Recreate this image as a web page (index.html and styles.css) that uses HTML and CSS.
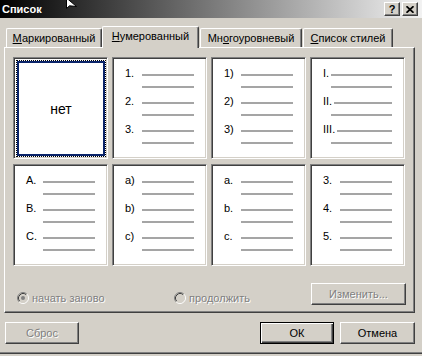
FILE: index.html
```html
<!DOCTYPE html>
<html lang="ru">
<head>
<meta charset="utf-8">
<title>Список</title>
<link rel="stylesheet" href="styles.css">
</head>
<body>
<div class="titlebar">
  <span class="title">Список</span>
  <div class="tbtns">
    <div class="tbtn q">?</div>
    <div class="tbtn">
      <svg width="8" height="7" viewBox="0 0 8 7"><path d="M0.5 0.2 L7.5 6.8 M7.5 0.2 L0.5 6.8" stroke="#000" stroke-width="1.7"/></svg>
    </div>
  </div>
</div>
<svg class="cursor" width="14" height="10" viewBox="0 0 14 10"><path d="M1.5 -2 L1.5 8.5 L4.5 5.8 L11.5 6.5 Z" fill="#fff" stroke="#000" stroke-width="1"/></svg>

<div class="tabs">
  <div class="tab t1"><span><u>М</u>аркированный</span></div>
  <div class="tab active"><span><u>Н</u>умерованный</span></div>
  <div class="tab t3"><span>Мн<u>о</u>гоуровневый</span></div>
  <div class="tab t4"><span><u>С</u>писок стилей</span></div>
</div>

<div class="panel">
  <div class="grid">
    <div class="cell selcell"><div class="focus"><div class="sel">нет</div></div></div>

    <div class="cell">
      <div class="it"><div class="r"><span class="n">1.</span><i class="ln"></i></div><div class="r r2"><i class="ln"></i></div></div>
      <div class="it"><div class="r"><span class="n">2.</span><i class="ln"></i></div><div class="r r2"><i class="ln"></i></div></div>
      <div class="it"><div class="r"><span class="n">3.</span><i class="ln"></i></div><div class="r r2"><i class="ln"></i></div></div>
    </div>

    <div class="cell">
      <div class="it"><div class="r"><span class="n">1)</span><i class="ln"></i></div><div class="r r2"><i class="ln"></i></div></div>
      <div class="it"><div class="r"><span class="n">2)</span><i class="ln"></i></div><div class="r r2"><i class="ln"></i></div></div>
      <div class="it"><div class="r"><span class="n">3)</span><i class="ln"></i></div><div class="r r2"><i class="ln"></i></div></div>
    </div>

    <div class="cell roman">
      <div class="it"><div class="r"><span class="n">I.</span><i class="ln"></i></div><div class="r r2"><i class="ln"></i></div></div>
      <div class="it"><div class="r"><span class="n">II.</span><i class="ln"></i></div><div class="r r2"><i class="ln"></i></div></div>
      <div class="it"><div class="r"><span class="n">III.</span><i class="ln"></i></div><div class="r r2"><i class="ln"></i></div></div>
    </div>

    <div class="cell">
      <div class="it"><div class="r"><span class="n">A.</span><i class="ln"></i></div><div class="r r2"><i class="ln"></i></div></div>
      <div class="it"><div class="r"><span class="n">B.</span><i class="ln"></i></div><div class="r r2"><i class="ln"></i></div></div>
      <div class="it"><div class="r"><span class="n">C.</span><i class="ln"></i></div><div class="r r2"><i class="ln"></i></div></div>
    </div>

    <div class="cell">
      <div class="it"><div class="r"><span class="n">a)</span><i class="ln"></i></div><div class="r r2"><i class="ln"></i></div></div>
      <div class="it"><div class="r"><span class="n">b)</span><i class="ln"></i></div><div class="r r2"><i class="ln"></i></div></div>
      <div class="it"><div class="r"><span class="n">c)</span><i class="ln"></i></div><div class="r r2"><i class="ln"></i></div></div>
    </div>

    <div class="cell">
      <div class="it"><div class="r"><span class="n">a.</span><i class="ln"></i></div><div class="r r2"><i class="ln"></i></div></div>
      <div class="it"><div class="r"><span class="n">b.</span><i class="ln"></i></div><div class="r r2"><i class="ln"></i></div></div>
      <div class="it"><div class="r"><span class="n">c.</span><i class="ln"></i></div><div class="r r2"><i class="ln"></i></div></div>
    </div>

    <div class="cell">
      <div class="it"><div class="r"><span class="n">3.</span><i class="ln"></i></div><div class="r r2"><i class="ln"></i></div></div>
      <div class="it"><div class="r"><span class="n">4.</span><i class="ln"></i></div><div class="r r2"><i class="ln"></i></div></div>
      <div class="it"><div class="r"><span class="n">5.</span><i class="ln"></i></div><div class="r r2"><i class="ln"></i></div></div>
    </div>
  </div>

  <div class="opts">
    <div class="radio r-first">
      <svg width="12" height="12" viewBox="0 0 12 12">
        <circle cx="6" cy="6" r="5" fill="#d4d0c8"/>
        <path d="M2.11 9.89 A5.5 5.5 0 0 1 9.89 2.11" fill="none" stroke="#808080" stroke-width="1"/>
        <path d="M9.89 2.11 A5.5 5.5 0 0 1 2.11 9.89" fill="none" stroke="#fff" stroke-width="1"/>
        <path d="M2.82 9.18 A4.5 4.5 0 0 1 9.18 2.82" fill="none" stroke="#404040" stroke-width="1"/>
        <path d="M9.18 2.82 A4.5 4.5 0 0 1 2.82 9.18" fill="none" stroke="#d4d0c8" stroke-width="1"/>
        <circle cx="6" cy="6" r="2" fill="#808080"/>
      </svg>
      <span class="dis">начать заново</span>
    </div>
    <div class="radio">
      <svg width="12" height="12" viewBox="0 0 12 12">
        <circle cx="6" cy="6" r="5" fill="#d4d0c8"/>
        <path d="M2.11 9.89 A5.5 5.5 0 0 1 9.89 2.11" fill="none" stroke="#808080" stroke-width="1"/>
        <path d="M9.89 2.11 A5.5 5.5 0 0 1 2.11 9.89" fill="none" stroke="#fff" stroke-width="1"/>
        <path d="M2.82 9.18 A4.5 4.5 0 0 1 9.18 2.82" fill="none" stroke="#404040" stroke-width="1"/>
        <path d="M9.18 2.82 A4.5 4.5 0 0 1 2.82 9.18" fill="none" stroke="#d4d0c8" stroke-width="1"/>
      </svg>
      <span class="dis">продолжить</span>
    </div>
    <div class="btn wide"><span class="dis">Изменить...</span></div>
  </div>
</div>

<div class="footer">
  <div class="btn"><span class="dis">Сброс</span></div>
  <div class="btn default">ОК</div>
  <div class="btn cancel">Отмена</div>
</div>
<div class="edge"></div>
</body>
</html>
```

FILE: styles.css
```css
* { box-sizing: border-box; }

body {
  margin: 0;
  width: 422px;
  height: 356px;
  overflow: hidden;
  background: #d4d0c8;
  font: 11px "Liberation Sans", Arial, sans-serif;
  color: #000;
  position: relative;
}

.titlebar {
  height: 18px;
  display: flex;
  align-items: center;
  padding: 0 4px 0 2px;
  background: linear-gradient(to right, #000 0%, #f2f2f2 100%);
}

.title {
  color: #fff;
  font-weight: bold;
  font-size: 11px;
}

.tbtns {
  margin-left: auto;
  display: flex;
  gap: 2px;
}

.tbtn {
  width: 16px;
  height: 14px;
  background: #d4d0c8;
  border: 1px solid;
  border-color: #fff #404040 #404040 #fff;
  box-shadow: inset -1px -1px #808080;
  display: flex;
  align-items: center;
  justify-content: center;
}

.tbtn.q {
  font-weight: bold;
  font-size: 11px;
  line-height: 12px;
}

.cursor {
  position: absolute;
  left: 65px;
  top: 0;
}

.tabs {
  display: flex;
  align-items: flex-end;
  height: 21px;
  margin-top: 8px;
  padding-left: 6px;
  position: relative;
  z-index: 1;
}

.tab {
  height: 19px;
  background: #d4d0c8;
  border-top: 1px solid #fff;
  border-left: 1px solid #fff;
  border-right: 1px solid #404040;
  box-shadow: inset -1px 0 #808080;
  border-radius: 2px 2px 0 0;
  display: flex;
  align-items: center;
  justify-content: center;
  padding-bottom: 1px;
}

.t1 { width: 96px; }
.active {
  width: 97px;
  height: 22px;
  margin-bottom: -1px;
  padding-bottom: 4px;
}
.t3 { width: 102px; margin-left: 1px; }
.t4 { width: 90px; margin-left: 1px; }

.panel {
  margin: 0 7px 0 4px;
  border-top: 1px solid #fff;
  border-left: 1px solid #fff;
  border-right: 1px solid #404040;
  border-bottom: 1px solid #404040;
  box-shadow: inset -1px -1px #808080;
  padding: 9px 8px 7px 8px;
}

.grid {
  display: grid;
  grid-template-columns: repeat(4, 95px);
  grid-template-rows: repeat(2, 102px);
  column-gap: 4px;
  row-gap: 5px;
}

.cell {
  background: #fff;
  border: 1px solid;
  border-color: #808080 #fff #fff #808080;
  box-shadow: inset 1px 1px #404040, inset -1px -1px #d4d0c8;
  padding: 11px 12px 0 12px;
  display: flex;
  flex-direction: column;
  gap: 4px;
}

.selcell {
  padding: 2px 1px 1px 2px;
}

.focus {
  flex: 1;
  border: 1px dotted #000;
  display: flex;
}

.sel {
  flex: 1;
  border: 2px solid #0a246a;
  display: flex;
  align-items: center;
  justify-content: center;
  font-size: 14px;
}

.r {
  display: flex;
  align-items: flex-start;
  height: 12px;
}

.n {
  width: 17px;
  flex-shrink: 0;
  line-height: 9px;
}

.ln {
  flex: 1;
  height: 2px;
  margin-top: 5px;
  background: #a5a5a5;
}

.r2 .ln { margin-left: 17px; }

.roman .n {
  width: auto;
  margin-right: 2px;
}

.roman .r2 .ln { margin-left: 8px; }

.opts {
  display: flex;
  align-items: flex-end;
  height: 22px;
  margin-top: 17px;
}

.radio {
  display: flex;
  align-items: center;
  gap: 3px;
  height: 13px;
  margin-bottom: 1px;
}

.r-first {
  width: 157px;
  margin-left: 4px;
}

.dis {
  color: #808080;
  text-shadow: 1px 1px 0 #fff;
}

.btn {
  height: 22px;
  width: 74px;
  background: #d4d0c8;
  border: 1px solid;
  border-color: #fff #404040 #404040 #fff;
  box-shadow: inset -1px -1px #808080;
  display: flex;
  align-items: center;
  justify-content: center;
}

.wide {
  width: 95px;
  margin-left: auto;
}

.footer {
  display: flex;
  margin-top: 9px;
  padding: 0 7px 0 5px;
}

.default {
  margin-left: auto;
  border: 1px solid #000;
  box-shadow: inset 1px 1px #fff, inset -1px -1px #404040, inset -2px -2px #808080;
}

.cancel {
  width: 75px;
  margin-left: 6px;
}

.edge {
  margin-top: 8px;
  height: 2px;
  border-top: 1px solid #808080;
  border-bottom: 1px solid #404040;
}
```
